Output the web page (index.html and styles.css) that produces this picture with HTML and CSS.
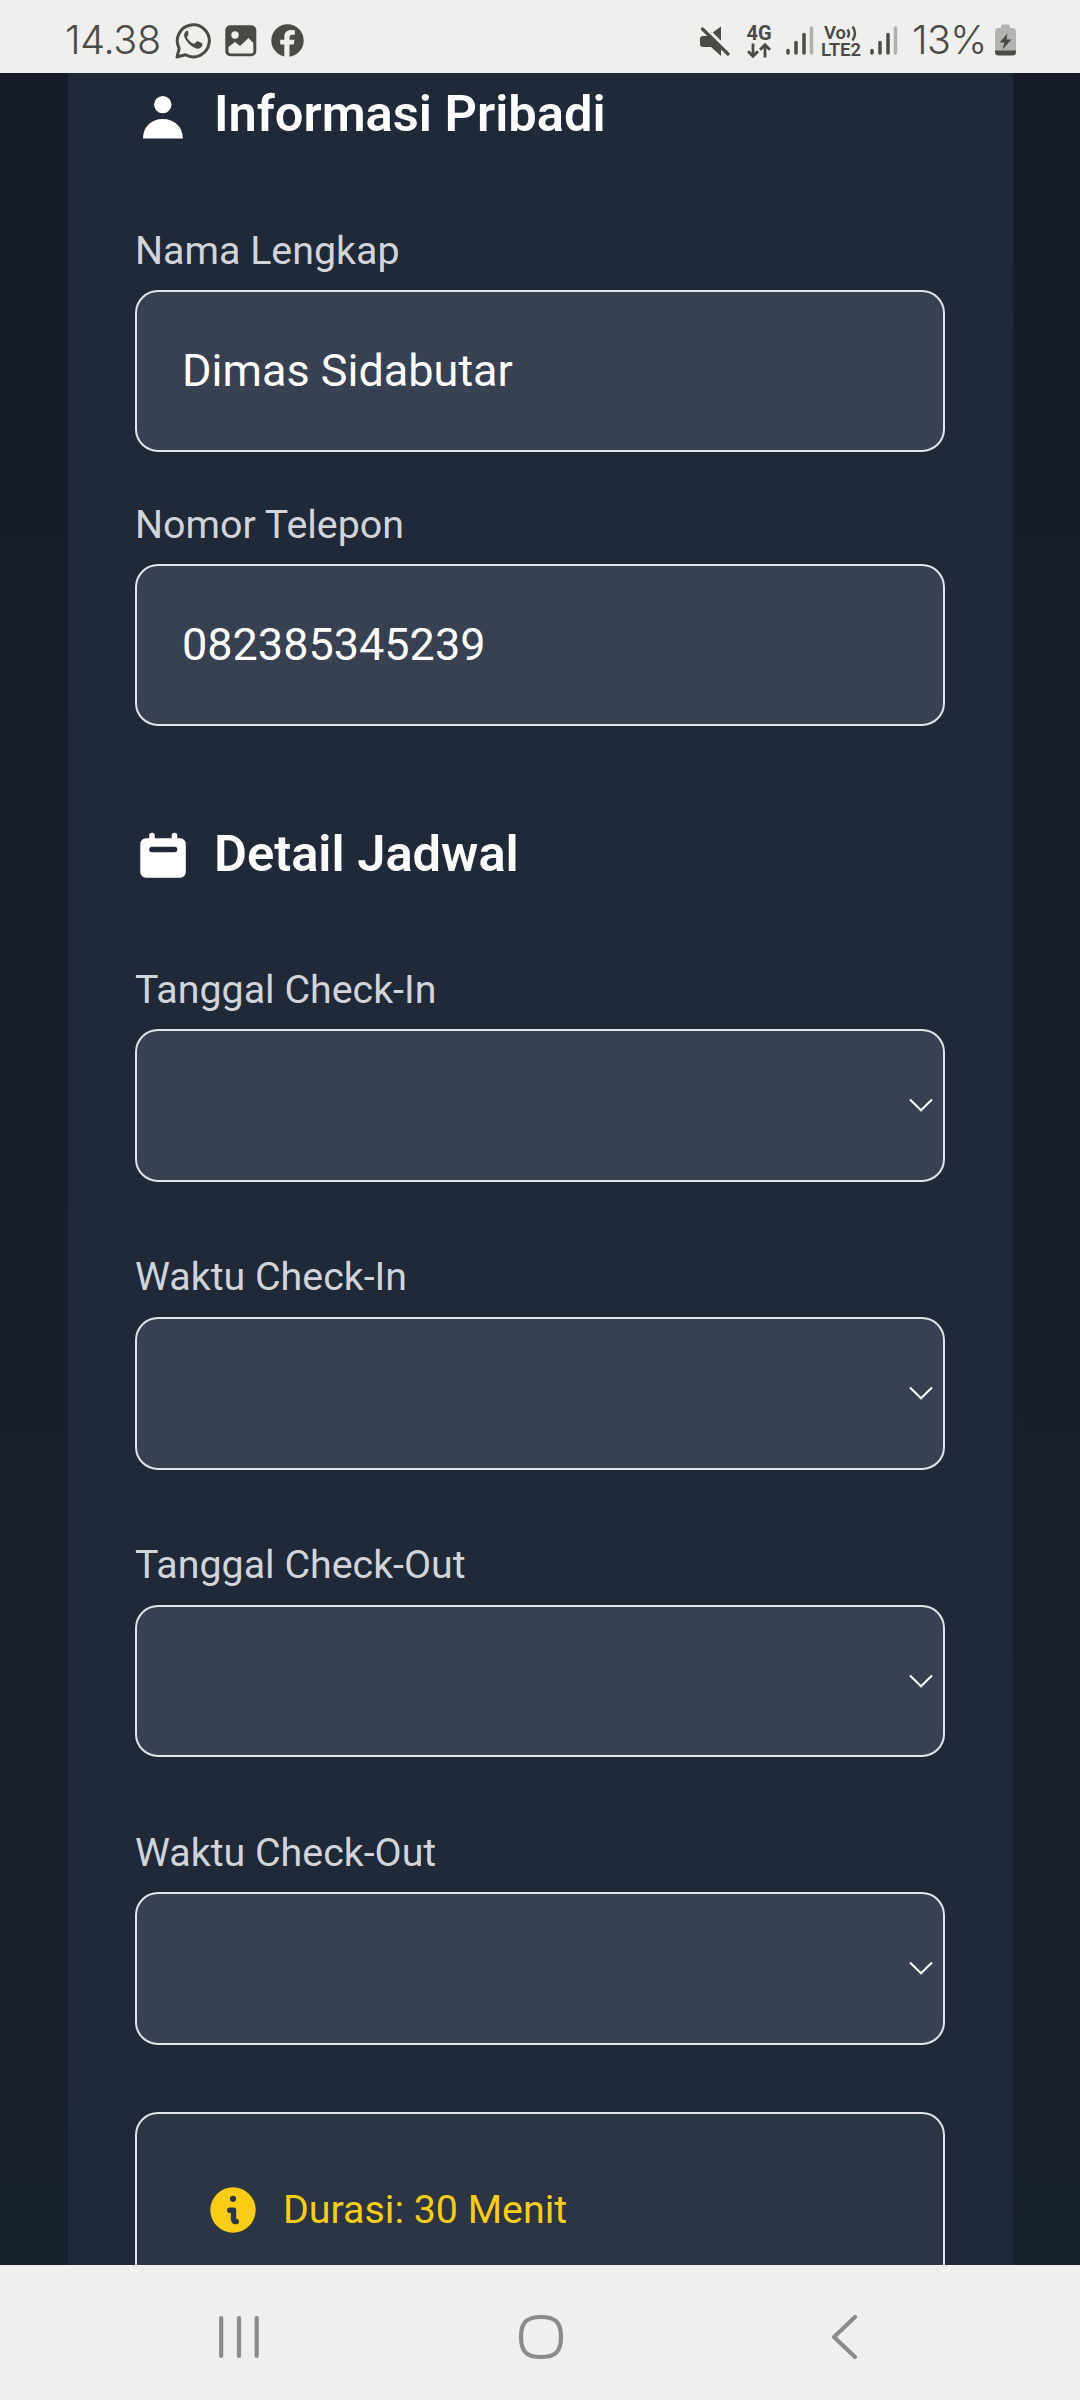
FILE: index.html
```html
<!DOCTYPE html>
<html lang="id">
<head>
<meta charset="utf-8">
<title>Informasi Pribadi</title>
<link rel="stylesheet" href="styles.css">
</head>
<body>
<div class="screen">
  <header class="status">
    <div class="status-left">
      <span class="clock">14.38</span>
      <svg class="ic-wa" width="36" height="37" viewBox="0 0 36 37"><path d="M2 35l2.200-8.600A16 16 0 1 1 10.500 32.800z" fill="none" stroke="#4a4a47" stroke-width="3" stroke-linejoin="round"/><path d="M13.400 9.700c-.6-1.300-1.900-1.100-2.800-.2-1.800 1.900-2 4.500-.4 7.300 2.600 4.500 5.500 7.600 10.300 9.500 2.900 1.100 6.200-.3 6.800-3 .3-1.400.1-1.800-.7-2.200l-3.800-1.800c-.8-.4-1.300-.1-2.600 1.700-.6.800-1.100.8-2 .4-2.800-1.300-4.700-3.100-6.100-5.700-.4-.8.1-1.300.9-2.300.5-.6.500-1 .2-1.600z" fill="#4a4a47"/></svg>
      <svg class="ic-img" width="32" height="32" viewBox="0 0 32 32"><rect x=".3" y=".3" width="31" height="31" rx="5" fill="#4a4a47"/><circle cx="10" cy="10" r="3.700" fill="#efefed"/><path d="M3.500 22l6.500-5 5 4 8.500-8 4.800 5v8.500a2 2 0 0 1-2 2H5.500a2 2 0 0 1-2-2z" fill="#efefed"/></svg>
      <svg class="ic-fb" width="33" height="33" viewBox="0 0 33 33"><circle cx="16.500" cy="16.500" r="16.200" fill="#4a4a47"/><path d="M13.300 33V20.500H9.200v-4.800h4.100v-2.600c0-4.600 2.700-7.100 6.800-7.100 1.700 0 3.300.2 3.700.3v4.400h-2.300c-2.300 0-3 1.300-3 2.800v2.200h5l-.8 4.800h-4.200V33z" fill="#efefed"/></svg>
    </div>
    <div class="status-right">
      <svg class="ic-mute" width="30" height="30" viewBox="0 0 30 30" fill="#4a4a47"><path d="M12 7L21 .5V17zM3 10h6l12 12v8L11 21H3a3 3 0 0 1-3-3v-5a3 3 0 0 1 3-3z"/><path d="M4.500 .5L31 26.500" stroke="#efefed" stroke-width="3"/><path d="M2.500 3L28 28" stroke="#4a4a47" stroke-width="3.200" stroke-linecap="round"/></svg>
      <div class="net net-4g"><span>4G</span><svg width="24" height="15" viewBox="0 0 24 15" fill="none" stroke="#4a4a47" stroke-width="2.800"><path d="M6 .5V13M1 8.300l5 5 5-5M18 14.500V2M13 6.700l5-5 5 5"/></svg></div>
      <svg class="ic-sig" width="28" height="30" viewBox="0 0 28 30" stroke-width="3.500" stroke-linecap="round" stroke="#4a4a47"><path d="M2 24.500V27M10 16.500V27M18 8.500V27"/><path d="M25.500 2V27" stroke="#b0b0ae"/></svg>
      <div class="net net-lte"><span class="vo">Vo<svg width="12" height="17" viewBox="0 0 12 17" fill="none" stroke="#4a4a47" stroke-width="2.400"><path d="M1.500 4.500q3 4 0 8M6.500 1.500q5 6.500 0 14"/></svg></span><span>LTE2</span></div>
      <svg class="ic-sig2" width="28" height="30" viewBox="0 0 28 30" stroke-width="3.500" stroke-linecap="round" stroke="#4a4a47"><path d="M2 24.500V27M10 16.500V27M18 8.500V27"/><path d="M25.500 2V27" stroke="#b0b0ae"/></svg>
      <span class="pct">13%</span>
      <svg class="ic-bat" width="21" height="32" viewBox="0 0 21 32"><path d="M6 4V2a1.500 1.500 0 0 1 1.500-1.500h6A1.500 1.500 0 0 1 15 2v2h2a4 4 0 0 1 4 4v19H0V8a4 4 0 0 1 4-4z" fill="#b3b3b1"/><path d="M0 26.500h21V28a3.500 3.500 0 0 1-3.500 3.500h-14A3.500 3.500 0 0 1 0 28z" fill="#4a4a47"/><path d="M12.500 9.500L4.500 18.500h4.800L7.500 25.500 16.500 15.500h-5z" fill="#4a4a47"/></svg>
    </div>
  </header>

  <main class="page">
    <form class="card">
      <h2 class="heading"><svg width="52" height="50" viewBox="0 0 52 50" fill="#fff"><circle cx="27.800" cy="15.600" r="8.700"/><path d="M8 49.500C8 38 16 30 27.800 30s20 8 20 19.500z"/></svg>Informasi Pribadi</h2>
      <label class="field"><span class="label">Nama Lengkap</span><span class="input">Dimas Sidabutar</span></label>
      <label class="field"><span class="label">Nomor Telepon</span><span class="input">082385345239</span></label>
      <h2 class="heading second"><svg width="52" height="50" viewBox="0 0 52 50"><rect x="5.300" y="9.300" width="45.500" height="39.400" rx="5.500" fill="#fff"/><path d="M17 6.500v8M39.500 6.500v8" stroke="#fff" stroke-width="5.600" stroke-linecap="round"/><path d="M17 20.500h22.500" stroke="#1f2937" stroke-width="5.600" stroke-linecap="round"/></svg>Detail Jadwal</h2>
      <label class="field pick"><span class="label">Tanggal Check-In</span><span class="select"><svg width="24" height="14" viewBox="0 0 24 14"><path d="M1 1.500L12 12.300 23 1.500" fill="none" stroke="#fff" stroke-width="2"/></svg></span></label>
      <label class="field pick raised"><span class="label">Waktu Check-In</span><span class="select"><svg width="24" height="14" viewBox="0 0 24 14"><path d="M1 1.500L12 12.300 23 1.500" fill="none" stroke="#fff" stroke-width="2"/></svg></span></label>
      <label class="field pick raised"><span class="label">Tanggal Check-Out</span><span class="select short"><svg width="24" height="14" viewBox="0 0 24 14"><path d="M1 1.500L12 12.300 23 1.500" fill="none" stroke="#fff" stroke-width="2"/></svg></span></label>
      <label class="field pick"><span class="label">Waktu Check-Out</span><span class="select"><svg width="24" height="14" viewBox="0 0 24 14"><path d="M1 1.500L12 12.300 23 1.500" fill="none" stroke="#fff" stroke-width="2"/></svg></span></label>
      <div class="info"><svg width="46" height="46" viewBox="0 0 46 46"><circle cx="23" cy="23" r="22.700" fill="#facc15"/><circle cx="23" cy="11.800" r="3.100" fill="#2b3543"/><path d="M19.700 23.200h3.800V32q0 3 2.800 2.500" fill="none" stroke="#2b3543" stroke-width="5.400" stroke-linecap="round" stroke-linejoin="round"/></svg><span class="info-text">Durasi: 30 Menit</span></div>
    </form>
  </main>

  <nav class="nav">
    <svg width="42" height="62" viewBox="0 0 42 62" fill="none" stroke="#8b8b8b" stroke-width="4.200" stroke-linecap="round"><path d="M3.200 12v38M21 12v38M38.700 12v38"/></svg>
    <svg class="home" width="46" height="62" viewBox="0 0 46 62"><path d="M23 11c14.500 0 20 5.500 20 20s-5.500 20-20 20S3 45.500 3 31 8.500 11 23 11z" fill="none" stroke="#8b8b8b" stroke-width="4.200"/></svg>
    <svg width="28" height="62" viewBox="0 0 28 62"><path d="M24 11L3 31l21 20" fill="none" stroke="#8b8b8b" stroke-width="4.200" stroke-linecap="round" stroke-linejoin="round"/></svg>
  </nav>
</div>
</body>
</html>
```
FILE: styles.css
```css
* { box-sizing: border-box; }
body { margin: 0; font-family: Roboto, "Liberation Sans", sans-serif; }
.screen { width: 1080px; height: 2400px; display: flex; flex-direction: column; overflow: hidden; }
svg { display: block; flex: none; }

.status { height: 73px; flex: none; background: #efefed; color: #4a4a47; display: flex; justify-content: space-between; padding: 0 64px 0 65px; }
.status-left, .status-right { display: flex; align-items: flex-start; }
.clock, .pct { font-family: Inter, sans-serif; font-weight: 350; font-size: 39.5px; line-height: 48px; margin-top: 16px; white-space: nowrap; }
.clock { width: 110px; letter-spacing: -0.3px; }
.ic-wa { margin-top: 22px; }
.ic-img { margin: 25px 0 0 14px; }
.ic-fb { margin: 24px 0 0 14px; }
.ic-mute { margin-top: 26px; }
.net { display: flex; flex-direction: column; align-items: center; font-weight: 700; font-size: 20px; line-height: 17px; }
.net-4g { width: 26px; margin: 25px 0 0 16px; gap: 1px; }
.ic-sig { margin: 26px 0 0 14px; }
.net-lte { width: 40px; margin: 25px 0 0 7px; font-size: 18.5px; font-weight: 600; }
.vo { display: flex; }
.ic-sig2 { margin: 26px 0 0 9px; }
.pct { width: 76px; margin-left: 14px; letter-spacing: -0.6px; }
.ic-bat { margin: 24px 0 0 7px; }

.page { height: 2192px; flex: none; overflow: hidden; padding: 0 67px 0 68px; background: linear-gradient(#151b29, #18222e); }
.card { display: flow-root; height: 2300px; padding: 0 68px 0 67px; background: #1f2937; }
.heading { display: flex; align-items: center; gap: 27px; height: 60px; margin: 11px 0 0; font-size: 50.6px; font-weight: 600; line-height: 60px; color: #fff; white-space: nowrap; }
.second { margin-top: 98px; }
.field { display: block; }
.label { display: block; font-size: 39.375px; line-height: 58px; color: #d1d5db; white-space: nowrap; }
.raised .label { line-height: 56px; padding-bottom: 2px; }
.input { display: flex; align-items: center; height: 162px; margin-top: 10px; padding: 0 45px 2px; border: 2px solid #e1e5eb; border-radius: 23px; background: #374151; color: #fff; font-size: 45px; }
.select { display: flex; align-items: center; justify-content: flex-end; height: 153px; margin-top: 10px; padding: 0 10px 1px 0; border: 2px solid #e1e5eb; border-radius: 23px; background: #374151; }
.short { height: 152px; }
.heading + .field { margin-top: 78px; }
.second + .field { margin-top: 77px; }
.field + .field { margin-top: 44px; }
.pick + .pick { margin-top: 67px; }
.info { display: flex; align-items: center; gap: 27px; height: 196px; margin-top: 67px; padding-left: 73px; border: 2px solid #e1e5eb; border-radius: 23px; background: #2b3543; color: #facc15; font-size: 39.375px; white-space: nowrap; }
.info-text { padding-bottom: 2px; }

.nav { height: 135px; flex: none; display: flex; padding: 41px 0 0 218px; background: #efefed; }
.home { margin: 0 267px 0 258px; }
```
